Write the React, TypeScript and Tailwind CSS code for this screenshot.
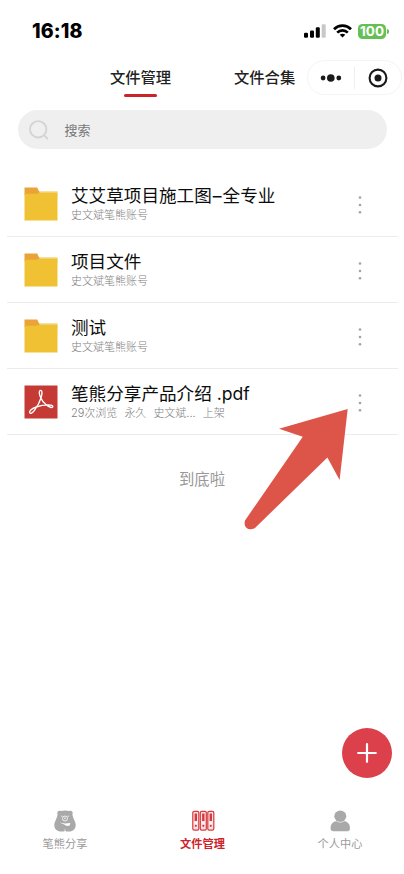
import React from "react";

const cjk = "font-['Inter','Noto_Sans_CJK_SC',sans-serif]";

function StatusBar() {
  return (
    <div className="flex h-[60px] items-start justify-between pl-[32px] pr-[15px] pt-[20px]">
      <div className="font-['Inter',sans-serif] text-[19.5px] font-extrabold leading-[22px] text-black tracking-[0.1px]">16:18</div>
      <div className="flex h-[22px] items-center">
        <svg width="22" height="14" viewBox="0 0 22 14" className="mr-[7px]">
          <rect x="0" y="8.7" width="4" height="5" rx="1.2" fill="#000" />
          <rect x="6" y="6.4" width="4" height="7.3" rx="1.2" fill="#000" />
          <rect x="11.8" y="3.2" width="4" height="10.5" rx="1.2" fill="#000" />
          <rect x="17.7" y="0.2" width="4" height="13.5" rx="1.2" fill="#c8c8c8" />
        </svg>
        <svg width="19" height="14" viewBox="0 0 19 14" className="mr-[6px]" fill="none" stroke="#000" strokeWidth="2.7">
          <path d="M1 5.2C5.8 .5 13.2 .5 18 5.2" />
          <path d="M4.2 8.6C7.2 5.6 11.8 5.6 14.8 8.6" />
          <path d="M9.5 13.4L6.7 10.7C8.2 9.3 10.8 9.3 12.3 10.7Z" fill="#000" stroke="none" />
        </svg>
        <div className="flex h-[15px] w-[28px] items-center justify-center rounded-[4.5px] bg-[#65bf55] font-['Inter',sans-serif] text-[13.5px] font-bold leading-[15px] text-white">100</div>
        <div className="ml-[1px] h-[5px] w-[2px] rounded-r-full bg-[#65bf55]" />
      </div>
    </div>
  );
}

function Header() {
  return (
    <div className="flex h-[50px] items-start pl-[110px]">
      <div className="mt-[8px] flex w-[61px] flex-col items-center">
        <span className="whitespace-nowrap text-[15.3px] font-medium leading-[20px] text-[#222]">文件管理</span>
        <span className="mt-[6px] h-[3px] w-[33px] rounded-full bg-[#cc2229]" />
      </div>
      <span className="ml-[63px] mt-[8px] w-[62px] whitespace-nowrap text-[15.3px] font-medium leading-[20px] text-[#222]">文件合集</span>
      <div className="ml-[11px] flex h-[35px] w-[95px] items-center rounded-full border border-[#f4f4f4]">
        <svg width="46" height="22" viewBox="0 0 46 22" fill="#1a1a1a">
          <circle cx="15.1" cy="11" r="2.4" />
          <circle cx="22.8" cy="11" r="3.8" />
          <circle cx="30.8" cy="11" r="2.4" />
        </svg>
        <div className="h-[22px] w-px bg-[#eee]" />
        <svg width="46" height="22" viewBox="0 0 46 22">
          <circle cx="23" cy="11" r="8.4" fill="none" stroke="#1a1a1a" strokeWidth="2.1" />
          <circle cx="23" cy="11" r="3.5" fill="#1a1a1a" />
        </svg>
      </div>
    </div>
  );
}

function FolderIcon() {
  return (
    <svg width="34" height="34" viewBox="0 0 34 34" className="shrink-0">
      <rect x="10" y="4" width="23.5" height="6" fill="#f7dfa0" />
      <path d="M.5 .5H13.2L15.6 5.5V8H.5Z" fill="#eaa338" />
      <path d="M.5 6.8H12.5Q14.5 6.5 16 5.6H33.5V33.5H.5Z" fill="#f0c133" />
    </svg>
  );
}

function PdfIcon() {
  return (
    <svg width="34" height="34" viewBox="0 0 34 34" className="shrink-0">
      <rect x=".5" y=".5" width="33" height="33" fill="#c53a34" />
      <g fill="none" stroke="#fff" strokeWidth="1.35" strokeLinecap="round" strokeLinejoin="round">
        <path d="M16.8 13C14.8 9 14.9 5.4 16.6 5.4C18.4 5.4 18.3 9 17 13C15.6 17.2 13.2 21.6 10.6 25.2C8.5 28.2 6.2 29.2 5.7 27.6C5.2 25.8 8.6 23.4 12.2 22C16 20.6 20.6 19.8 24.3 19.8C27.4 19.8 29.2 20.6 28.8 21.8C28.3 23.2 25.2 22.2 22.4 20C19.8 18 18 15.6 16.8 13Z" />
      </g>
    </svg>
  );
}

function MoreDots() {
  return (
    <svg width="4" height="20" viewBox="0 0 4 20" fill="#a3a3a3" className="mr-[36px] mt-[3px]">
      <circle cx="2" cy="2.5" r="1.3" />
      <circle cx="2" cy="10" r="1.3" />
      <circle cx="2" cy="17.3" r="1.3" />
    </svg>
  );
}

function Row({ title, meta, pdf }: { title: React.ReactNode; meta: string[]; pdf?: boolean }) {
  return (
    <div className="flex h-[66px] items-center border-b border-[#ececec] pl-[17px]">
      {pdf ? <PdfIcon /> : <FolderIcon />}
      <div className="ml-[13px] flex flex-1 flex-col">
        <span className="whitespace-nowrap text-[17.6px] leading-[22px] text-[#0c0c0c]">{title}</span>
        <span className="mt-px flex gap-[7px] whitespace-nowrap text-[11px] font-light leading-[15px] text-[#808080]">
          {meta.map((m) => (
            <span key={m}>{m}</span>
          ))}
        </span>
      </div>
      <MoreDots />
    </div>
  );
}

function BearIcon() {
  return (
    <svg width="24" height="24" viewBox="0 0 24 24">
      <path
        d="M4.6 5.6C3.4 3 5.4 .9 7.8 2.1C10.5 1.4 13.5 1.4 16.2 2.1C18.6 .9 20.6 3 19.4 5.6C20 8 20.4 9.4 21.4 11.4C23.6 15.6 23 19.4 19.8 21.4C17.4 22.8 14.4 22.9 12 22.1C9.6 22.9 6.6 22.8 4.2 21.4C1 19.4 .4 15.6 2.6 11.4C3.6 9.4 4 8 4.6 5.6Z"
        fill="#a9a9a9"
      />
      <path d="M12 20V22.6" stroke="#fff" strokeWidth=".6" />
      <circle cx="12" cy="9.5" r="2.5" fill="none" stroke="#fff" strokeWidth=".8" />
      <circle cx="12" cy="9.3" r=".8" fill="#fff" />
      <circle cx="8.8" cy="7.2" r=".6" fill="#fff" />
      <circle cx="15.2" cy="7.2" r=".6" fill="#fff" />
      <path d="M6.8 13.6L12 14.6L17.4 14L16.6 16.6C14.6 17.2 12.6 17 11.2 15.6Z" fill="#fff" />
    </svg>
  );
}

function BinderIcon() {
  return (
    <svg width="24" height="24" viewBox="0 0 24 24">
      {[1.8, 9.3, 16.8].map((x) => (
        <g key={x}>
          <rect x={x} y="2.3" width="6" height="18.8" rx="1.4" fill="#fbe3e3" stroke="#d6393f" strokeWidth="1.2" />
          <path d={`M${x + 3} 4.5V12`} stroke="#d6393f" strokeWidth="2.4" />
          <path d={`M${x + 1.6} 14H${x + 4.4}`} stroke="#fff" strokeWidth="1.3" />
          <circle cx={x + 3} cy="16.8" r="1.1" fill="#d6393f" />
        </g>
      ))}
    </svg>
  );
}

function PersonIcon() {
  return (
    <svg width="24" height="24" viewBox="0 0 24 24" fill="#a9a9a9">
      <ellipse cx="12.3" cy="7.2" rx="6" ry="5.7" />
      <path d="M2.6 19.2C2.6 15 5.4 12.3 8.6 12.3Q12.3 14.8 16 12.3C19.2 12.3 22 15 22 19.2Q22 22.2 19.4 22.2H5.2Q2.6 22.2 2.6 19.2Z" />
    </svg>
  );
}

function Tab({ label, icon, active }: { label: string; icon: React.ReactNode; active?: boolean }) {
  return (
    <div className={`flex w-[46px] flex-col items-center ${active ? "font-bold text-[#cc2229]" : "text-[#9b9b9b]"}`}>
      {icon}
      <span className="mt-[3px] whitespace-nowrap text-[11.2px] leading-[16px]">{label}</span>
    </div>
  );
}

export default function App() {
  return (
    <div className={`relative flex h-[874px] w-[404px] flex-col overflow-hidden bg-white ${cjk}`}>
      <StatusBar />
      <Header />
      <div className="ml-[18px] mr-[17px] flex h-[39px] items-center rounded-full bg-[#efefef] pl-[11px]">
        <svg width="20" height="20" viewBox="0 0 20 20" fill="none" stroke="#d4d4d4" strokeWidth="1.9" strokeLinecap="round">
          <circle cx="9.2" cy="9.3" r="8.2" />
          <path d="M15 15.2L18.3 18.5" />
        </svg>
        <span className="ml-[15.5px] text-[13px] leading-[20px] text-[#777]">搜索</span>
      </div>
      <div className="mt-[22px] ml-[7px] mr-[6px] flex flex-col">
        <Row
          title={<>艾艾草项目施工图<span className="px-[1px]">–</span>全专业</>}
          meta={["史文斌笔熊账号"]}
        />
        <Row title="项目文件" meta={["史文斌笔熊账号"]} />
        <Row title="测试" meta={["史文斌笔熊账号"]} />
        <Row title="笔熊分享产品介绍 .pdf" meta={["29次浏览", "永久", "史文斌...", "上架"]} pdf />
      </div>
      <div className="mt-[35px] text-center text-[15.4px] leading-[20px] text-[#999]">到底啦</div>
      <div className="mt-auto flex h-[65px] justify-between pl-[42px] pr-[41px]">
        <Tab label="笔熊分享" icon={<BearIcon />} />
        <Tab label="文件管理" icon={<BinderIcon />} active />
        <Tab label="个人中心" icon={<PersonIcon />} />
      </div>
      <svg width="110" height="126" viewBox="0 0 110 126" className="absolute left-[242px] top-[406px]">
        <path
          d="M105.7 3L97.6 74L85.4 51.4L14.5 120.5C10 126 .5 123 3 114.5L60.8 30.8L37 22.8Z"
          fill="#dd5449"
        />
      </svg>
      <button className="absolute left-[342px] top-[728px] flex h-[50px] w-[50px] items-center justify-center rounded-full bg-[#db404b]">
        <svg width="20" height="20" viewBox="0 0 20 20" stroke="#fff" strokeWidth="2.2" strokeLinecap="round">
          <path d="M1.2 10H18.8M10 1.2V18.8" />
        </svg>
      </button>
    </div>
  );
}
